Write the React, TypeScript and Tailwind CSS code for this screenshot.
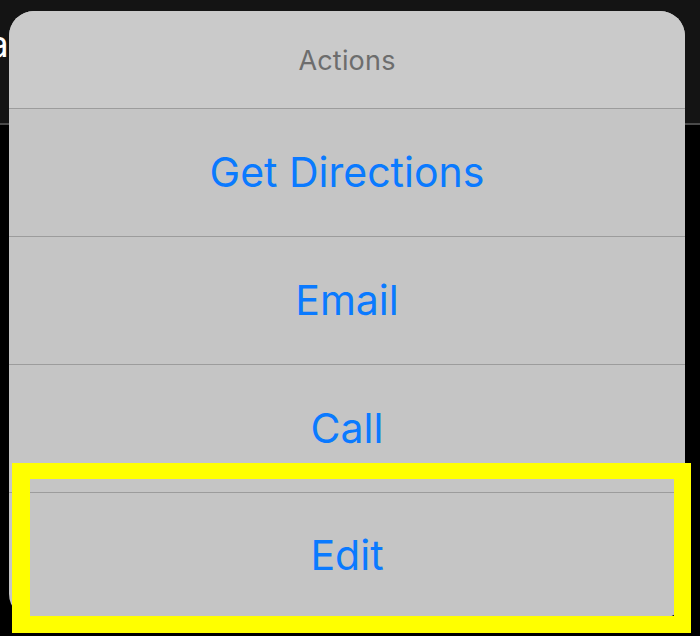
import * as React from 'react';

const actions = ['Get Directions', 'Email', 'Call', 'Edit'];

export default function App() {
  return (
    <div className="relative w-[700px] h-[636px] overflow-hidden bg-black font-['Inter','Liberation_Sans',sans-serif]">
      {/* page behind the sheet */}
      <div className="h-[125px] bg-[#141414] border-b-2 border-[#4a4a4a] pt-[25px]">
        <span className="block -ml-[12px] text-[37px] leading-none text-white">a</span>
      </div>

      {/* action sheet */}
      <div className="absolute left-[9px] top-[11px] w-[676px] h-[608px] rounded-[25px] overflow-hidden bg-[#c5c5c5] flex flex-col">
        <div className="h-[98px] shrink-0 flex items-center justify-center pt-[3px] bg-[#cacaca] border-b border-[#9c9c9c]">
          <span className="text-[27px] text-[#6d6d6d] tracking-[0.2px]">Actions</span>
        </div>
        {actions.map((label, i) => (
          <div
            key={label}
            className={
              i < actions.length - 1
                ? 'h-[128px] shrink-0 flex items-center justify-center border-b border-[#9c9c9c]'
                : 'flex-1 flex items-center justify-center'
            }
          >
            <span className="text-[41px] text-[#0a7aff]">{label}</span>
          </div>
        ))}
      </div>

      {/* highlight */}
      <div className="absolute left-[12px] top-[463px] w-[679px] h-[170px] border-[#ffff00] border-t-[16px] border-b-[17px] border-l-[18px] border-r-[17px]" />
    </div>
  );
}
